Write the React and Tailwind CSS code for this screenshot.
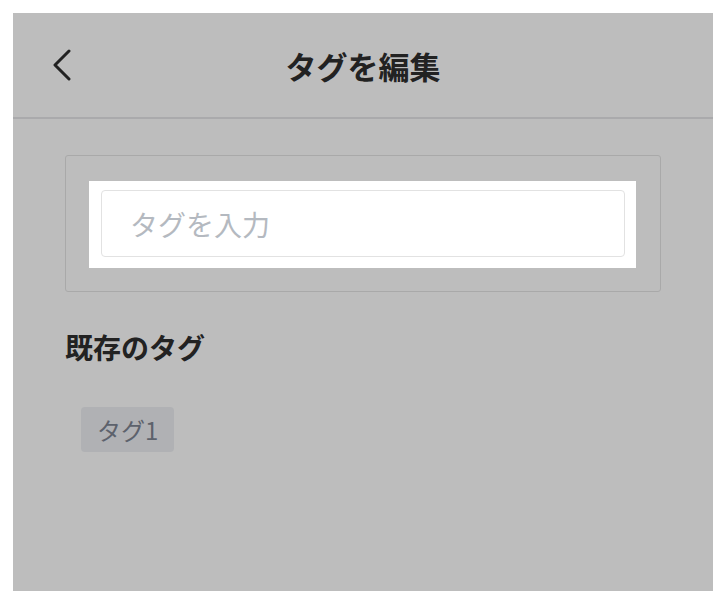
import React from 'react';

const font = { fontFamily: '"Noto Sans CJK JP", "Noto Sans", sans-serif' };

const BackIcon = () => (
  <svg width="20" height="32" viewBox="0 0 20 32" fill="none">
    <path d="M17 2 L3 16 L17 30" stroke="#222222" strokeWidth="3" strokeLinecap="round" strokeLinejoin="round" />
  </svg>
);

const App = () => {
  return (
    <div className="bg-white p-[13px] h-[604px] w-[726px]" style={font}>
      <div className="bg-[#bdbdbd] h-[578px] w-[700px]">
        {/* header */}
        <header className="grid grid-cols-[1fr_auto_1fr] items-center h-[106px] border-b-2 border-[#aaaaac] px-[39px]">
          <div className="flex items-center">
            <BackIcon />
          </div>
          <h1 className="text-[31px] font-bold text-[#222222] leading-none">タグを編集</h1>
          <div />
        </header>

        <div className="px-[52px] pt-[36px]">
          <div className="border border-[#a9a9a9] rounded-[3px] h-[137px] pl-[23px] pr-[24px] pt-[25px]">
            <div className="bg-white h-[87px] pl-[12px] pr-[11px] pt-[9px] pb-[11px]">
              <input
                type="text"
                placeholder="タグを入力"
                className="w-full h-[67px] border border-[#e2e2e2] rounded-[4px] pl-[28px] text-[28px] text-[#333] placeholder:text-[#b4b9c0] outline-none bg-white"
                style={font}
              />
            </div>
          </div>

          <h2 className="mt-[41px] text-[28px] font-bold text-[#222222] leading-none">既存のタグ</h2>

          <div className="mt-[46px] flex flex-wrap gap-2 pl-[16px]">
            <span className="inline-flex items-center h-[45px] px-[16px] rounded-[4px] bg-[#b0b1b4] text-[#5d626c] text-[24px] leading-none">
              タグ1
            </span>
          </div>
        </div>
      </div>
    </div>
  );
};

export default App;
